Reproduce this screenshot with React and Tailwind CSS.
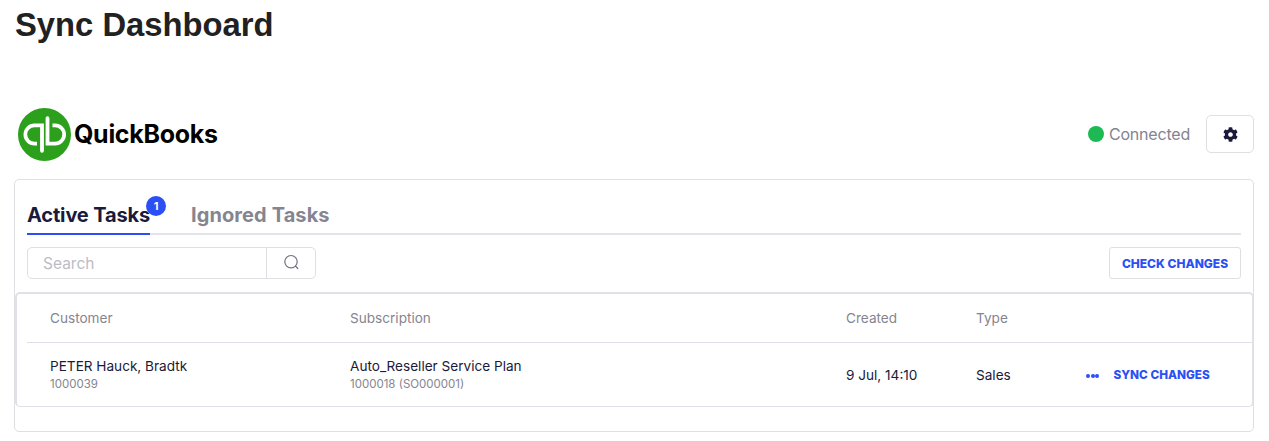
const QuickBooksLogo = () => (
  <svg className="w-[53px] h-[53px] shrink-0" viewBox="0 0 53 53">
    <circle cx="26.5" cy="26.5" r="26.5" fill="#2ca01c" />
    <path
      d="M19 15.5h-2.5a11 11 0 0 0 0 22h2.5v-3.7h-2.5a7.3 7.3 0 0 1 0-14.6h5.6v23.6a1.9 1.9 0 0 0 3.8 0V15.5z"
      fill="#fff"
    />
    <path
      d="M34 37.5h2.5a11 11 0 0 0 0-22H34v3.7h2.5a7.3 7.3 0 0 1 0 14.6h-5.6V10.2a1.9 1.9 0 0 0-3.8 0v27.3z"
      fill="#fff"
      transform="translate(0.5 0)"
    />
  </svg>
);

const SearchIcon = () => (
  <svg className="w-[17px] h-[17px]" viewBox="0 0 17 17" fill="none" stroke="#6f7080" strokeWidth="1.2">
    <circle cx="8" cy="7.7" r="6.2" />
    <path d="M12.6 12.2l2.2 2.3" strokeLinecap="round" />
  </svg>
);

const GearIcon = () => (
  <svg className="w-[15px] h-[15px]" viewBox="0 0 512 512" fill="#1a1a3a">
    <path d="M487.4 315.7l-42.6-24.6c4.3-23.2 4.3-47 0-70.2l42.6-24.6c4.9-2.8 7.1-8.6 5.5-14-11.1-35.6-30-67.8-54.7-94.6-3.8-4.1-10-5.1-14.8-2.3L380.8 110c-17.9-15.4-38.5-27.3-60.8-35.1V25.8c0-5.6-3.9-10.5-9.4-11.7-36.7-8.2-74.3-7.8-109.2 0-5.5 1.2-9.4 6.1-9.4 11.7V75c-22.2 7.9-42.8 19.8-60.8 35.1L88.7 85.5c-4.9-2.8-11-1.9-14.8 2.3-24.7 26.7-43.6 58.9-54.7 94.6-1.7 5.4.6 11.2 5.5 14L67.3 221c-4.3 23.2-4.3 47 0 70.2l-42.6 24.6c-4.9 2.8-7.1 8.6-5.5 14 11.1 35.6 30 67.8 54.7 94.6 3.8 4.1 10 5.1 14.8 2.3l42.6-24.6c17.9 15.4 38.5 27.3 60.8 35.1v49.2c0 5.6 3.9 10.5 9.4 11.7 36.7 8.2 74.3 7.8 109.2 0 5.5-1.2 9.4-6.1 9.4-11.7v-49.2c22.2-7.9 42.8-19.8 60.8-35.1l42.6 24.6c4.9 2.8 11 1.9 14.8-2.3 24.7-26.7 43.6-58.9 54.7-94.6 1.5-5.5-.7-11.3-5.6-14.1zM256 336c-44.1 0-80-35.9-80-80s35.9-80 80-80 80 35.9 80 80-35.9 80-80 80z" />
  </svg>
);

const columns = "grid grid-cols-[300px_496px_130px_110px_1fr]";

export default function App() {
  return (
    <div className="bg-white h-[441px] overflow-hidden font-['Inter',sans-serif] text-[#1a1a3a]">
      <h1 className="pl-[15px] pt-[7px] h-[108px] font-['Liberation_Sans',sans-serif] font-bold text-[32.75px] leading-[36px] text-[#212121]">
        Sync Dashboard
      </h1>

      <div className="flex items-center justify-between pl-[18px] pr-[15px] h-[53px]">
        <div className="flex items-center gap-[3px]">
          <QuickBooksLogo />
          <span className="font-bold text-[25px] tracking-[-0.3px] text-black">QuickBooks</span>
        </div>
        <div className="flex items-center pb-[1px]">
          <span className="w-[16px] h-[16px] rounded-full bg-[#1db954]" />
          <span className="ml-[5px] text-[16px] tracking-[-0.2px] text-[#83838f]">Connected</span>
          <button className="ml-[16px] flex items-center justify-center w-[48px] h-[38px] rounded-[5px] border border-[#dfdfe3]">
            <GearIcon />
          </button>
        </div>
      </div>

      <div className="mt-[18px] mx-[14px] mr-[15px] h-[253px] rounded-[5px] border border-[#dfdfe3]">
        <div className="mx-[12px] mt-[15px] flex gap-[41px] h-[40px] border-b-2 border-[#e3e3e9]">
          <div className="relative h-[40px] border-b-2 border-[#2a4ff5] text-[20px] leading-[40px] font-bold tracking-[-0.15px]">
            Active Tasks
            <span className="absolute top-[1px] -right-[16px] flex items-center justify-center w-[20px] h-[20px] rounded-full bg-[#2a4ff5] text-white text-[11px] leading-none font-bold">
              1
            </span>
          </div>
          <div className="text-[20px] leading-[40px] font-bold tracking-[0.1px] text-[#85858f]">Ignored Tasks</div>
        </div>

        <div className="mx-[12px] mt-[12px] flex justify-between">
          <div className="flex w-[289px] h-[32px] rounded-[5px] border border-[#dfdfe3]">
            <span className="w-[239px] pl-[15px] pt-[1px] border-r border-[#dfdfe3] text-[15.5px] leading-[30px] text-[#bcbcc6]">
              Search
            </span>
            <span className="flex-1 flex items-center justify-center pb-[2px]">
              <SearchIcon />
            </span>
          </div>
          <button className="w-[132px] h-[32px] pt-[2px] rounded-[3px] border border-[#dfdfe3] text-[12px] font-extrabold text-[#2a4ff5]">
            CHECK CHANGES
          </button>
        </div>

        <div className="mt-[13px] -mr-px h-[115px] rounded-[5px] border-2 border-b border-[#e0e0e6]">
          <div className={`${columns} h-[49px] ml-[10px] border-b border-[#e0e0e6] text-[13.6px] text-[#85858f] items-center`}>
            <span className="pl-[23px]">Customer</span>
            <span className="pl-[23px]">Subscription</span>
            <span className="pl-[23px]">Created</span>
            <span className="pl-[23px]">Type</span>
            <span />
          </div>
          <div className={`${columns} h-[63px] ml-[10px] text-[13.6px] items-center`}>
            <div className="pl-[23px]">
              <div className="leading-[17px]">PETER Hauck, Bradtk</div>
              <div className="pt-[1px] text-[11.5px] leading-[16px] text-[#85858f]">1000039</div>
            </div>
            <div className="pl-[23px]">
              <div className="leading-[17px]">Auto_Reseller Service Plan</div>
              <div className="pt-[1px] text-[11.5px] leading-[16px] text-[#85858f]">1000018 (SO000001)</div>
            </div>
            <span className="pl-[23px] pt-[2px]">9 Jul, 14:10</span>
            <span className="pl-[23px] pt-[2px]">Sales</span>
            <div className="flex items-center pl-[23px] pt-[2px] text-[#2a4ff5]">
              <span className="flex gap-[0.5px]">
                <span className="w-[4px] h-[4px] rounded-full bg-[#2a4ff5]" />
                <span className="w-[4px] h-[4px] rounded-full bg-[#2a4ff5]" />
                <span className="w-[4px] h-[4px] rounded-full bg-[#2a4ff5]" />
              </span>
              <span className="ml-[14.5px] text-[11.75px] font-extrabold whitespace-nowrap">SYNC CHANGES</span>
            </div>
          </div>
        </div>
      </div>
    </div>
  );
}
